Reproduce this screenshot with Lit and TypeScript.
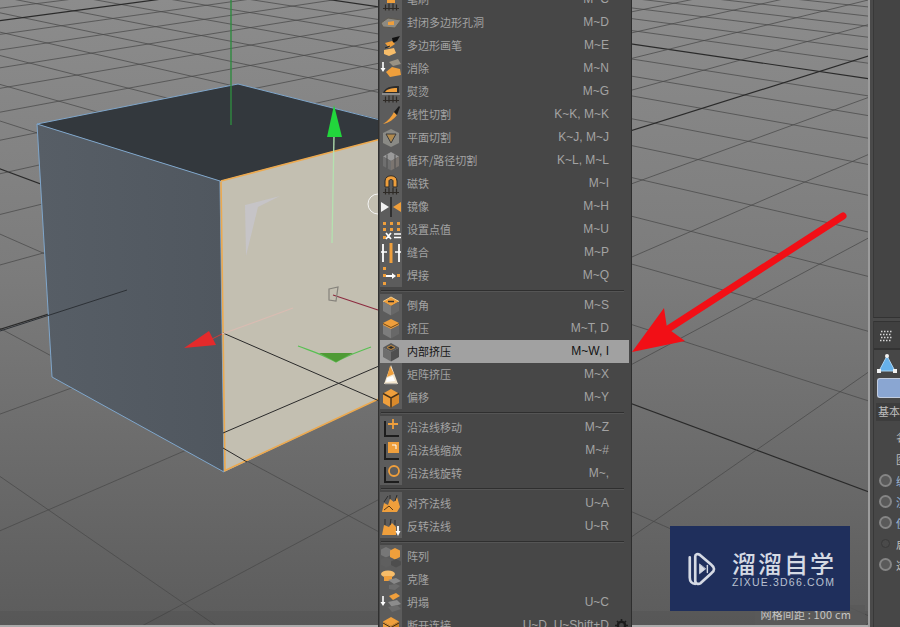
import { LitElement, html, css, svg } from "lit";
import { customElement } from "lit/decorators.js";

const OR = "#ef9f3c";
const OL = "#f7bd6a";

const comb = svg`<path d="M3 19.5H19M5.5 15.5v6M9 14.5v7M13 14.5v7M16.5 15.5v6" stroke="#2e2a26" stroke-width="1.2" fill="none"/>`;
const cube = (top: string, left: string, right: string) => svg`
  <path d="M11 2 19 6.5 11 11 3 6.5Z" fill="${top}"/>
  <path d="M3 6.5 11 11V20.5L3 16Z" fill="${left}"/>
  <path d="M19 6.5 11 11V20.5L19 16Z" fill="${right}"/>`;
const axis = svg`<path d="M5 4V19H19" stroke="#1d1d1d" stroke-width="2" fill="none"/>`;
const down = (x: number) => svg`<path d="M${x} 4V11" stroke="#fff" stroke-width="1.6"/><path d="M${x - 2.5} 10H${x + 2.5}L${x} 14Z" fill="#fff"/>`;

const ICONS: Record<string, unknown> = {
  brush: svg`<path d="M7 12C7 7 15 7 15 12V14H7Z" fill="${OR}"/>${comb}`,
  hole: svg`<path d="M1 11 8 6 21 8 15 16 3 15Z" fill="#8d8a82"/><path d="M8 10 14 9 14 13 8 13Z" fill="${OR}"/><path d="M1 11 8 6 21 8 15 16 3 15Z" fill="none" stroke="#5d5950"/>`,
  pen: svg`<path d="M12 3 20 1 17 6 13 8Z" fill="#111"/><path d="M5 8 12 6 15 9 9 13Z" fill="${OR}"/><path d="M4 15 14 13 16 18 9 21 4 19Z" fill="${OL}"/><path d="M5 13 10 11" stroke="#222"/>`,
  dissolve: svg`${down(3)}<path d="M9 4 18 1 21 6 13 8Z" fill="#9a9284"/><path d="M6 14 12 9 20 11 21 17 10 19Z" fill="${OR}"/>`,
  iron: svg`<path d="M3 12C5 6 11 5 19 5V12Z" fill="#2c2c2c"/><path d="M5 11C7 8 11 7 17 7V11Z" fill="${OR}"/><path d="M2 13H20" stroke="#bbb"/>${comb}`,
  knife: svg`<path d="M3 20C8 17 12 12 14 8L17 11C14 15 9 19 3 20Z" fill="${OR}"/><path d="M14 8 19 2 20 3 17 11Z" fill="#1c1c1c"/>`,
  plane: svg`<path d="M11 2 19 6V16L11 20 3 16V6Z" fill="#8a8a85"/><path d="M6 7H16L11 16Z" fill="#b08a4e" stroke="#3b3b3b"/>`,
  loop: svg`${cube("#9a9a9a", "#6f6f6f", "#7b7570")}<path d="M7 4.5V18.5M15 4.5V18.5" stroke="#4d4d4d"/>`,
  magnet: svg`<path d="M5 14V8C5 1 17 1 17 8V14H13V8C13 6 9 6 9 8V14Z" fill="${OR}" stroke="#2a2a2a"/>${comb}`,
  mirror: svg`<path d="M1 6 9 11 1 16Z" fill="#f2f2f2"/><path d="M21 6 13 11 21 16Z" fill="${OR}"/><path d="M11 1V21" stroke="#222" stroke-width="1.5"/>`,
  points: svg`<g fill="${OR}"><rect x="3" y="3" width="3" height="3"/><rect x="10" y="3" width="3" height="3"/><rect x="17" y="3" width="3" height="3"/><rect x="3" y="9" width="3" height="3"/><rect x="10" y="9" width="3" height="3"/><rect x="17" y="9" width="3" height="3"/><rect x="3" y="17" width="3" height="3"/></g><path d="M6 14 11 20M11 14 6 20M14 15H21M14 18.5H21" stroke="#fff" stroke-width="1.7"/>`,
  stitch: svg`<path d="M11 1V21" stroke="${OR}" stroke-width="3"/><path d="M3 2V20M19 2V20" stroke="#fff" stroke-width="1.8"/><path d="M1 10H7M21 10H15" stroke="#fff" stroke-width="1.5"/>`,
  weld: svg`<g fill="${OR}"><rect x="3" y="2" width="3" height="3"/><rect x="3" y="9" width="3" height="3"/><rect x="3" y="17" width="3" height="3"/><rect x="17" y="9" width="3" height="3"/></g><path d="M6 11H13" stroke="#fff" stroke-width="2"/><path d="M12 8 16 11 12 14Z" fill="#fff"/>`,
  bevel: svg`${cube(OR, "#7d7d7d", "#686868")}<path d="M3 6.5 11 2 19 6.5" stroke="#f6d08e" fill="none"/><path d="M8 6.5H14" stroke="#333" stroke-width="1.5"/>`,
  extrude: svg`${cube("#8a8a8a", "#7d7d7d", "#686868")}<path d="M11 1 19 5V7L11 11 3 7V5Z" fill="${OR}"/><path d="M3 5.5 11 9.5 19 5.5" stroke="#70491a" fill="none"/>`,
  inner: svg`${cube("#595959", "#6d6d6d", "#4f4f4f")}<path d="M11 4.5 15 6.5 11 8.5 7 6.5Z" fill="#2c2c2c" stroke="#c48a3c"/>`,
  matrix: svg`<path d="M11 1 18 20H4Z" fill="#f3e6cf"/><path d="M10 2 14 10 7 13Z" fill="${OR}"/><path d="M7 14 13 12 15 17 6 18Z" fill="#fff"/><path d="M5 20H17" stroke="#8a8a8a"/>`,
  offset: svg`${cube(OR, OR, "#d98a2c")}<path d="M3 6.5 11 11 19 6.5M11 11V20.5" stroke="#47321a" stroke-width="1.5" fill="none"/>`,
  nmove: svg`${axis}<path d="M13 2V12M8 7H18" stroke="${OR}" stroke-width="1.8"/>`,
  nscale: svg`${axis}<rect x="8" y="2" width="11" height="11" fill="${OR}"/><path d="M12 5H16V9" stroke="#fff" fill="none"/>`,
  nrotate: svg`${axis}<circle cx="14" cy="8" r="5" fill="none" stroke="${OR}" stroke-width="1.8"/>`,
  align: svg`<path d="M2 19 4 10 8 12 10 6 14 9 17 4 20 14 17 19Z" fill="${OR}"/><path d="M4 9 8 3M10 6V2M15 8 17 2" stroke="#2c2c2c"/><path d="M4 17 9 13 13 17" stroke="#5b3a14" fill="none"/>`,
  flip: svg`<path d="M2 19 4 9 9 11 12 7 16 11V19Z" fill="${OR}"/><path d="M5 9V3M10 9 11 3M15 9V4" stroke="#2c2c2c"/><path d="M18 10V16" stroke="#fff" stroke-width="1.8"/><path d="M15.5 15H20.5L18 20Z" fill="#fff"/>`,
  array: svg`<path d="M6 1 11 3.5V9L6 11.5 1 9V3.5Z" fill="#777"/><path d="M15 2 20 4.5V11L15 13.5 10 11V4.5Z" fill="${OR}"/><path d="M6 11 11 13.5V19L6 21.5 1 19V13.5Z" fill="#5f5f5f"/><path d="M16 13 21 15.5V19L16 21.5 11 19V15.5Z" fill="#4e4e4e"/>`,
  clone: svg`<ellipse cx="8" cy="5" rx="7" ry="3.5" fill="${OL}"/><path d="M4 7H12V12H4Z" fill="${OR}"/><path d="M8 11 16 9 21 12 14 15Z" fill="#888"/><path d="M9 16 16 15 20 17 15 21 9 20Z" fill="#6c6c6c"/>`,
  collapse: svg`${down(3)}<path d="M9 4 16 1 20 4 13 8Z" fill="${OR}"/><path d="M8 10 17 8 21 12 12 15Z" fill="#8c8c8c"/><path d="M8 15 17 13 21 17 12 20Z" fill="#6b6b6b"/>`,
  split: svg`${cube(OR, OR, "#cf8428")}<path d="M3 8 11 12.5 19 8" stroke="#3f2b13" fill="none"/>`,
};

type Item = { icon: string; label: string; key?: string; active?: boolean; gear?: boolean };

const GROUPS: Item[][] = [
  [
    { icon: "brush", label: "笔刷", key: "M~C" },
    { icon: "hole", label: "封闭多边形孔洞", key: "M~D" },
    { icon: "pen", label: "多边形画笔", key: "M~E" },
    { icon: "dissolve", label: "消除", key: "M~N" },
    { icon: "iron", label: "熨烫", key: "M~G" },
    { icon: "knife", label: "线性切割", key: "K~K, M~K" },
    { icon: "plane", label: "平面切割", key: "K~J, M~J" },
    { icon: "loop", label: "循环/路径切割", key: "K~L, M~L" },
    { icon: "magnet", label: "磁铁", key: "M~I" },
    { icon: "mirror", label: "镜像", key: "M~H" },
    { icon: "points", label: "设置点值", key: "M~U" },
    { icon: "stitch", label: "缝合", key: "M~P" },
    { icon: "weld", label: "焊接", key: "M~Q" },
  ],
  [
    { icon: "bevel", label: "倒角", key: "M~S" },
    { icon: "extrude", label: "挤压", key: "M~T, D" },
    { icon: "inner", label: "内部挤压", key: "M~W, I", active: true },
    { icon: "matrix", label: "矩阵挤压", key: "M~X" },
    { icon: "offset", label: "偏移", key: "M~Y" },
  ],
  [
    { icon: "nmove", label: "沿法线移动", key: "M~Z" },
    { icon: "nscale", label: "沿法线缩放", key: "M~#" },
    { icon: "nrotate", label: "沿法线旋转", key: "M~," },
  ],
  [
    { icon: "align", label: "对齐法线", key: "U~A" },
    { icon: "flip", label: "反转法线", key: "U~R" },
  ],
  [
    { icon: "array", label: "阵列" },
    { icon: "clone", label: "克隆" },
    { icon: "collapse", label: "坍塌", key: "U~C" },
    { icon: "split", label: "断开连接", key: "U~D, U~Shift+D", gear: true },
  ],
];

const ATTRS = [
  { label: "名称", blue: false, radio: "" },
  { label: "图层", blue: false, radio: "" },
  { label: "编辑器可见", blue: true, radio: "on" },
  { label: "渲染器可见", blue: true, radio: "on" },
  { label: "使用颜色", blue: true, radio: "on" },
  { label: "启用", blue: false, radio: "dim" },
  { label: "透显", blue: false, radio: "on" },
];

// ground grid: both line families meet at a vanishing point, evenly spaced along y=627
const VP_A = [-965, -190];
const VP_B = [1698, -205];
const gridLines = () => {
  const lines = [];
  for (let k = -1; k <= 21; k++) {
    const major = k === 3 || k === 13;
    lines.push(svg`<line class=${major ? "major" : "minor"} x1=${VP_A[0]} y1=${VP_A[1]} x2=${218 + 338 * k} y2="627"/>`);
  }
  for (let j = -18; j <= 3; j++) {
    const major = j === -3 || j === -13;
    lines.push(svg`<line class=${major ? "major" : "minor"} x1=${VP_B[0]} y1=${VP_B[1]} x2=${140 + 362 * j} y2="627"/>`);
  }
  return lines;
};

@customElement("app-root")
class AppRoot extends LitElement {
  static styles = css`
    :host {
      display: block;
      width: 900px;
      height: 627px;
      overflow: hidden;
      font-family: "Noto Sans CJK SC", "Liberation Sans", sans-serif;
      background: #474747;
    }
    * {
      box-sizing: border-box;
    }
    .app {
      display: grid;
      grid-template-columns: 868px 32px;
      height: 627px;
    }
    .viewport {
      position: relative;
      height: 627px;
      border-bottom: 2px solid #aaa;
    }
    .scene {
      display: block;
      width: 868px;
      height: 625px;
    }
    .minor {
      stroke: #4a4a4a;
      stroke-width: 1;
      stroke-opacity: 0.75;
    }
    .major {
      stroke: #2a2a2a;
      stroke-width: 1.2;
    }
    .status {
      position: absolute;
      right: 3px;
      bottom: 0;
      width: 110px;
      height: 20px;
      padding: 0 14px 0 0;
      background: rgba(90, 90, 90, 0.75);
      color: #c6c6c6;
      font-size: 11px;
      line-height: 18px;
      letter-spacing: 0.15px;
      text-align: right;
      white-space: nowrap;
    }
    .band {
      position: absolute;
      left: 0;
      right: 0;
      bottom: 0;
      height: 14px;
      background: rgba(0, 0, 0, 0.05);
    }
    .mark {
      position: absolute;
      left: 670px;
      top: 526px;
      width: 180px;
      height: 85px;
      background: #1f2f5c;
      display: flex;
      align-items: center;
      gap: 14px;
      padding: 0 0 0 15px;
      color: #d5dae4;
    }
    .mark svg {
      flex: none;
      display: block;
    }
    .mark-name {
      font-size: 24px;
      line-height: 27px;
      font-weight: 500;
      letter-spacing: 2px;
      white-space: nowrap;
    }
    .mark-site {
      font-family: "Liberation Sans", sans-serif;
      font-size: 10.5px;
      line-height: 12px;
      letter-spacing: 1.2px;
      white-space: nowrap;
      color: #b9c0d0;
    }
    .menu {
      position: absolute;
      left: 378px;
      top: -12px;
      width: 254px;
      padding: 0 2px 0 2px;
      background: #474747;
      border-left: 1px solid #303030;
      border-right: 1px solid #2e2e2e;
    }
    .row {
      display: grid;
      grid-template-columns: 22px 1fr auto 20px;
      align-items: center;
      height: 23px;
      margin-left: -1px;
      font-size: 11px;
      color: #a3a3a3;
      white-space: nowrap;
    }
    .row.active {
      background: #a1a1a1;
      color: #131313;
    }
    .ico {
      height: 23px;
      background: #5c5c5c;
      display: flex;
      align-items: center;
      justify-content: center;
    }
    .row.active .ico {
      background: transparent;
    }
    .ico svg {
      display: block;
    }
    .label {
      padding: 0 0 2px 5px;
    }
    .key {
      padding-bottom: 2px;
      font-family: "Liberation Sans", sans-serif;
      font-size: 12px;
    }
    .gear {
      display: flex;
      justify-content: flex-end;
      padding-right: 1px;
    }
    .sep {
      height: 7px;
      display: flex;
      align-items: center;
      padding-right: 5px;
    }
    .sep::after {
      content: "";
      flex: 1;
      height: 1px;
      background: #2f2f2f;
      box-shadow: 0 1px 0 #555;
    }
    .panel {
      border-left: 2px solid #9c9c9c;
      height: 627px;
      padding-left: 3px;
      background: #4a4a4a;
      overflow: hidden;
      font-size: 11px;
      color: #bdbdbd;
    }
    .upper {
      height: 318px;
      background: #444;
      border-left: 1px solid #383838;
      border-bottom: 1px solid #333;
    }
    .lower {
      margin-top: 3px;
      border-left: 1px solid #383838;
      background: #474747;
      height: 306px;
    }
    .tabbar {
      height: 29px;
      background: #404040;
      border-top: 1px solid #333;
      border-bottom: 2px solid #333;
      display: flex;
      align-items: center;
      padding: 3px 0 0 6px;
    }
    .tabbar svg,
    .mode svg {
      display: block;
    }
    .mode {
      height: 28px;
      display: flex;
      align-items: center;
      padding-left: 1px;
    }
    .chip {
      height: 20px;
      margin-left: 3px;
      background: #8aa6d2;
      border: 1px solid #c2cde0;
      border-right: 0;
      border-radius: 3px 0 0 3px;
    }
    .tab {
      margin: 5px 0 5px 2px;
      height: 18px;
      line-height: 17px;
      padding-left: 2px;
      background: #3d3d3d;
      white-space: nowrap;
      overflow: hidden;
    }
    .attr {
      display: grid;
      grid-template-columns: 22px 1fr;
      align-items: center;
      height: 21px;
      white-space: nowrap;
    }
    .attr.plain {
      height: 22px;
    }
    .attr.blue {
      color: #9db8d8;
    }
    .radio {
      justify-self: center;
      width: 13px;
      height: 13px;
      border-radius: 50%;
      border: 2px solid #858585;
      background: #5a5a5a;
    }
    .radio.dim {
      width: 9px;
      height: 9px;
      border: 1px solid #3a3a3a;
      background: #4a4a4a;
    }
    .radio.none {
      visibility: hidden;
    }
  `;

  renderScene() {
    return html`<svg class="scene" viewBox="0 0 868 625" aria-hidden="true">
      <defs>
        <linearGradient id="floor" x1="0" y1="0" x2="0" y2="1">
          <stop offset="0" stop-color="#8c8c8c" />
          <stop offset="0.45" stop-color="#7b7b7b" />
          <stop offset="1" stop-color="#5c5c5c" />
        </linearGradient>
        <linearGradient id="side" x1="0" y1="0" x2="1" y2="0">
          <stop offset="0" stop-color="#575e66" />
          <stop offset="1" stop-color="#50575f" />
        </linearGradient>
      </defs>
      <rect width="868" height="625" fill="url(#floor)" />
      ${gridLines()}
      <!-- cube -->
      <path d="M37 124 238 84 420 130 220 181Z" fill="#33383d" />
      <path d="M37 124 220 181 224 472 52 377Z" fill="url(#side)" />
      <path d="M220 181 400 134V389L224 472Z" fill="#c3bfb1" />
      <path d="M37 124 238 84 400 125M37 124 220 181 224 472 52 377Z" fill="none" stroke="#7fa6cb" stroke-width="1" />
      <path d="M224 471 400 389M221 181 400 134M221 182 225 471" fill="none" stroke="#eca94f" stroke-width="1.6" />
      <path d="M245 205 280 196 258 207 246 256Z" fill="#c9c9d8" opacity="0.55" />
      <!-- grid lines that show through the cube -->
      <line x1="0" y1="331" x2="127" y2="290" stroke="#2d3136" stroke-width="1" />
      <line x1="223" y1="333" x2="400" y2="410" stroke="#2a2a2a" stroke-width="1" />
      <line x1="223" y1="433" x2="400" y2="357" stroke="#2a2a2a" stroke-width="1" />
      <line x1="223" y1="448" x2="247" y2="462" stroke="#2a2a2a" stroke-width="1" />
      <!-- axis gizmo -->
      <line x1="231" y1="0" x2="231" y2="125" stroke="#2f8a3f" stroke-width="1.4" />
      <line x1="334" y1="136" x2="332" y2="243" stroke="#b4e2b0" stroke-width="1.3" />
      <path d="M334 105 342 137H327Z" fill="#22d63c" />
      <path d="M298 346C314 352 322 354 336 362 348 355 358 352 371 347" fill="none" stroke="#58c052" stroke-width="1.2" />
      <path d="M319 353H353L336 362Z" fill="#4f9a35" />
      <line x1="333" y1="295" x2="378" y2="310" stroke="#8c2b3f" stroke-width="1.2" />
      <line x1="293" y1="308" x2="222" y2="334" stroke="#d9bcb2" stroke-width="1.2" />
      <line x1="222" y1="334" x2="212" y2="339" stroke="#c9403a" stroke-width="1" />
      <path d="M184 348 209 331 216 345Z" fill="#e42a2b" />
      <path d="M329 289 338 287 336 301 329 300Z" fill="none" stroke="#85827b" stroke-width="1.2" />
      <path d="M378 194A10 10 0 0 0 378 214" fill="none" stroke="#f4f4f4" stroke-width="1" />
      <!-- annotation arrow -->
      <path d="M843 216 665 331" stroke="#f20f16" stroke-width="7" stroke-linecap="round" fill="none" />
      <path d="M632 352 664 308 667 328 685 341Z" fill="#f20f16" />
    </svg>`;
  }

  renderMark() {
    return html`<div class="mark">
      <svg width="33" height="36" viewBox="0 0 36 46" fill="none" stroke="#d5dae4" stroke-width="3.4" stroke-linejoin="round" stroke-linecap="round">
        <path d="M3 8V34C3 39 6 42 10 42" />
        <path d="M10 7C10 4 13 3 16 5L31 18C35 21 35 25 31 28L17 41C14 43 10 42 10 38V7Z" />
        <path d="M15.5 17V29L23 23Z" fill="#d5dae4" stroke-width="1" />
        <path d="M25.5 18.5V27.5" stroke-width="1.8" />
      </svg>
      <div>
        <div class="mark-name">溜溜自学</div>
        <div class="mark-site">ZIXUE.3D66.COM</div>
      </div>
    </div>`;
  }

  renderRow(item: Item) {
    return html`<div class="row ${item.active ? "active" : ""}">
      <div class="ico"><svg width="22" height="22" viewBox="0 0 22 22">${ICONS[item.icon]}</svg></div>
      <div class="label">${item.label}</div>
      <div class="key">${item.key ?? ""}</div>
      <div class="gear">
        ${item.gear
          ? html`<svg width="13" height="13" viewBox="0 0 13 13"><circle cx="6.5" cy="6.5" r="3.6" fill="none" stroke="#1c1c1c" stroke-width="2.4" /><path d="M6.5 0V13M0 6.5H13M2 2 11 11M11 2 2 11" stroke="#1c1c1c" stroke-width="1.6" stroke-dasharray="2.4 8.2 2.4" /></svg>`
          : ""}
      </div>
    </div>`;
  }

  render() {
    return html`<div class="app">
      <div class="viewport">
        ${this.renderScene()}
        <div class="band"></div>
        <div class="status">网格间距 : 100 cm</div>
        ${this.renderMark()}
        <div class="menu">
          ${GROUPS.map(
            (group, i) => html`${i > 0 ? html`<div class="sep"></div>` : ""}${group.map((item) => this.renderRow(item))}`
          )}
        </div>
      </div>
      <div class="panel">
        <div class="upper"></div>
        <div class="lower">
          <div class="tabbar">
            <svg width="13" height="13" viewBox="0 0 13 13">
              <path d="M1 1.5H13M0 4.5H12M1 7.5H13M0 10.5H12" stroke="#d6d6d6" stroke-width="1.5" stroke-dasharray="1.5 1.5" />
            </svg>
          </div>
          <div class="mode">
            <svg width="24" height="22" viewBox="0 0 24 22">
              <path d="M12 3 20 18H4Z" fill="#66b1ea" stroke="#a9d2f0" />
              <g fill="#f2f2f2"><circle cx="12" cy="3" r="2" /><rect x="2" y="16" width="4" height="4" /><rect x="18" y="16" width="4" height="4" /></g>
            </svg>
          </div>
          <div class="chip"></div>
          <div class="tab">基本属性</div>
          ${ATTRS.map(
            (a) => html`<div class="attr ${a.blue ? "blue" : ""} ${a.radio === "" ? "plain" : ""}">
              <div class="radio ${a.radio === "dim" ? "dim" : a.radio === "" ? "none" : ""}"></div>
              <span>${a.label}</span>
            </div>`
          )}
        </div>
      </div>
    </div>`;
  }
}

export { AppRoot };
